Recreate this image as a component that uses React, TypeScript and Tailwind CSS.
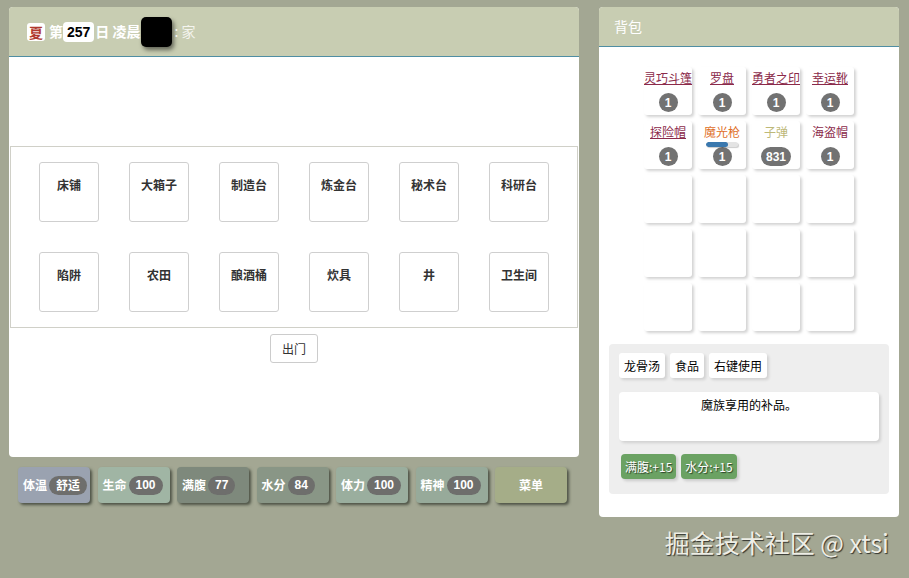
import React from "react";

const font = { fontFamily: '"Noto Sans CJK SC", "Noto Sans", sans-serif' };

const buildings = [
  ["床铺", "大箱子", "制造台", "炼金台", "秘术台", "科研台"],
  ["陷阱", "农田", "酿酒桶", "炊具", "井", "卫生间"],
];

type Item = { name: string; color: string; underline: boolean; count: string; bar?: boolean };
const items: Item[] = [
  { name: "灵巧斗篷", color: "text-[#8b2a4a]", underline: true, count: "1" },
  { name: "罗盘", color: "text-[#8b2a4a]", underline: true, count: "1" },
  { name: "勇者之印", color: "text-[#8b2a4a]", underline: true, count: "1" },
  { name: "幸运靴", color: "text-[#8b2a4a]", underline: true, count: "1" },
  { name: "探险帽", color: "text-[#8b2a4a]", underline: true, count: "1" },
  { name: "魔光枪", color: "text-[#e0702a]", underline: false, count: "1", bar: true },
  { name: "子弹", color: "text-[#bdb878]", underline: false, count: "831" },
  { name: "海盗帽", color: "text-[#8b2a4a]", underline: false, count: "1" },
];

const stats = [
  { label: "体温", value: "舒适", bg: "bg-[#9aa2b0]" },
  { label: "生命", value: "100", bg: "bg-[#a0b5a4]" },
  { label: "满腹", value: "77", bg: "bg-[#7e897c]" },
  { label: "水分", value: "84", bg: "bg-[#899686]" },
  { label: "体力", value: "100", bg: "bg-[#9aae9e]" },
  { label: "精神", value: "100", bg: "bg-[#97aa9a]" },
];

export default function App() {
  return (
    <div style={font} className="w-[909px] h-[578px] bg-[#a3a793] relative overflow-hidden">
      <div className="flex pt-[7px] pl-[9px] gap-[20px]">
        {/* Left column */}
        <div className="flex flex-col w-[570px]">
          <div className="bg-white rounded-[4px] h-[450px] flex flex-col overflow-hidden">
            <div className="h-[50px] bg-[#c8cdb2] border-b border-[#4f8ea3] flex items-center pl-[18px] text-white text-[14px] font-bold">
              <span className="w-[18px] h-[18px] bg-white rounded-[3px] text-[#b03a2e] flex items-center justify-center text-[14px] leading-none">夏</span>
              <span className="ml-[4px]">第</span>
              <span className="h-[20px] px-[4px] bg-white rounded-[4px] text-black flex items-center text-[14px] leading-none font-bold" style={{ fontFamily: '"Liberation Sans", sans-serif' }}>257</span>
              <span className="ml-[1px]">日 凌晨</span>
              <span className="w-[31px] h-[30px] bg-black rounded-[5px] shadow-[2px_3px_4px_rgba(0,0,0,0.5)]"></span>
              <span className="ml-[3px] font-normal text-[#f4f4ee]">: 家</span>
            </div>
            <div className="h-[89px]"></div>
            <div className="border border-[#d0d0c8] mx-[1px] flex flex-col items-center">
              {buildings.map((row, ri) => (
                <div key={ri} className="flex">
                  {row.map((b) => (
                    <div key={b} className="m-[15px] w-[60px] h-[60px] border border-[#cfcfcf] rounded-[3px] flex justify-center pt-[13px] text-[12px] font-bold text-[#333]">
                      {b}
                    </div>
                  ))}
                </div>
              ))}
            </div>
            <div className="flex justify-center pt-[6px]">
              <button className="h-[29px] px-[11px] border border-[#ccc] rounded-[3px] bg-white text-[12px] text-[#333]">出门</button>
            </div>
          </div>
          <div className="flex gap-[7.5px] pl-[9px] mt-[10px]">
            {stats.map((s) => (
              <div key={s.label} className={`${s.bg} w-[72px] h-[36px] rounded-[4px] shadow-[2px_2px_3px_rgba(40,45,35,0.7)] flex items-center pl-[5px] text-white text-[12px] font-bold`}>
                <span>{s.label}</span>
                <span className="ml-[2px] px-[7px] h-[19px] rounded-full bg-[#6e6e6c] flex items-center" style={s.value === "舒适" ? undefined : { fontFamily: '"Liberation Sans", sans-serif' }}>{s.value}</span>
              </div>
            ))}
            <div className="bg-[#a5ad88] w-[72px] h-[36px] rounded-[4px] shadow-[2px_2px_3px_rgba(40,45,35,0.7)] flex items-center justify-center text-white text-[12px] font-bold">
              菜单
            </div>
          </div>
        </div>

        {/* Right panel */}
        <div className="w-[300px] h-[510px] bg-white rounded-[4px] overflow-hidden flex flex-col">
          <div className="h-[40px] bg-[#c8cdb2] border-b border-[#4f8ea3] flex items-center pl-[15px] text-white text-[14px]">背包</div>
          <div className="flex justify-center pt-[17px]">
            <div className="grid grid-cols-4 w-[216px]">
              {Array.from({ length: 20 }).map((_, i) => {
                const it = items[i];
                return (
                  <div key={i} className="m-[3px] w-[48px] h-[48px] rounded-[3px] bg-white shadow-[2px_2px_3px_rgba(0,0,0,0.18)] flex flex-col items-center relative">
                    {it && (
                      <>
                        <span className={`${it.color} ${it.underline ? "underline" : ""} text-[12px] leading-none mt-[5px] whitespace-nowrap`}>{it.name}</span>
                        {it.bar && (
                          <div className="absolute left-[8px] top-[21px] w-[32px] h-[5px] rounded-full bg-[#e4e4e4] shadow-[1px_1px_1px_rgba(0,0,0,0.2)] overflow-hidden">
                            <div className="h-full bg-[#3a78ae] rounded-full" style={{ width: "70%" }}></div>
                          </div>
                        )}
                        <span className="mt-auto mb-[3px] h-[19px] min-w-[19px] px-[5px] rounded-full bg-[#727272] text-white text-[12px] font-bold flex items-center justify-center leading-none" style={{ fontFamily: '"Liberation Sans", sans-serif' }}>{it.count}</span>
                      </>
                    )}
                  </div>
                );
              })}
            </div>
          </div>
          <div className="mx-[10px] mt-[10px] bg-[#eeeeee] rounded-[4px] h-[150px] px-[10px] pt-[9px]">
            <div className="flex gap-[5px]">
              {["龙骨汤", "食品", "右键使用"].map((t) => (
                <span key={t} className="bg-white rounded-[3px] shadow-[2px_2px_3px_rgba(0,0,0,0.12)] px-[5px] h-[25px] flex items-center text-[12px] text-black">{t}</span>
              ))}
            </div>
            <div className="mt-[14px] h-[49px] bg-white rounded-[4px] shadow-[2px_2px_3px_rgba(0,0,0,0.12)] text-center text-[12px] text-black pt-[4px]">
              魔族享用的补品。
            </div>
            <div className="flex gap-[5px] mt-[13px] ml-[2px]">
              {["满腹:+15", "水分:+15"].map((t) => (
                <span key={t} className="bg-[#6ba263] rounded-[4px] shadow-[2px_2px_3px_rgba(0,0,0,0.15)] px-[4px] h-[25px] flex items-center text-[12px] text-white [text-shadow:1px_1px_1px_rgba(0,0,0,0.6)]">{t}</span>
              ))}
            </div>
          </div>
        </div>
      </div>
      <div className="absolute right-[20px] top-[530px] text-[25px] text-[#eeeee6] [text-shadow:1px_1px_1px_rgba(0,0,0,0.7)] leading-none" style={{ fontFamily: '"Noto Sans CJK SC", "DejaVu Sans", sans-serif' }}>
        掘金技术社区 @ xtsi
      </div>
    </div>
  );
}
